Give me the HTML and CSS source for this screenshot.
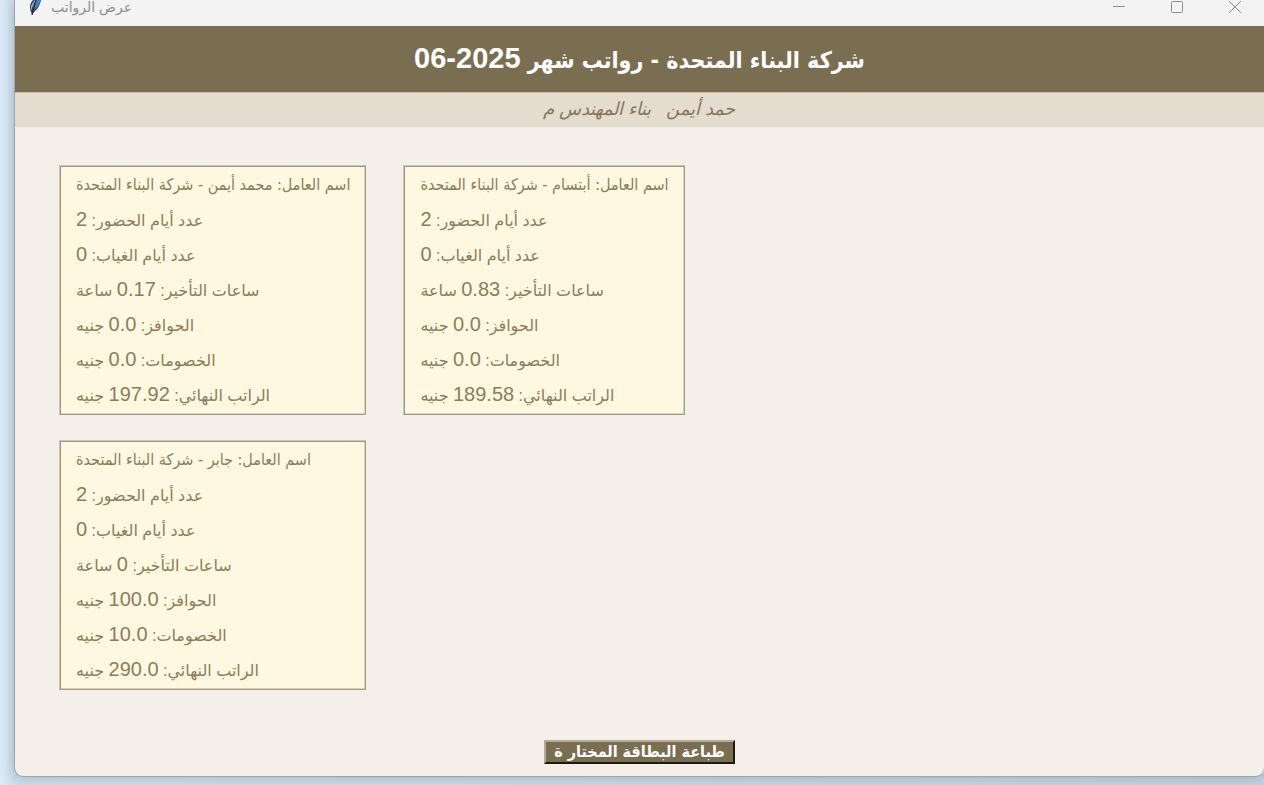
FILE: index.html
```html
<!DOCTYPE html>
<html lang="ar">
<head>
<meta charset="utf-8">
<title>عرض الرواتب</title>
<link rel="stylesheet" href="styles.css">
</head>
<body>
<div class="window">
  <div class="titlebar">
    <svg class="app-icon" width="12" height="16" viewBox="0 0 12 16" aria-hidden="true">
      <path d="M12 0 L4 0 C1 3 0 8 2 12 L3 15 L5 12 C9 9 11 5 12 0Z" fill="#3a444f"/>
      <path d="M12 0 L7 0 C5 4 4 7 4 11 C8 8 11 4 12 0Z" fill="#3f7fd0"/>
      <path d="M6 0 C3 4 1 7 2 11 C3 7 5 3 7 0Z" fill="#a9b6bd"/>
      <path d="M7 0 L3 15" stroke="#14181d" fill="none"/>
    </svg>
    <span class="caption" dir="rtl">عرض الرواتب</span>
    <div class="controls">
      <button type="button" aria-label="Minimize"><svg width="12" height="14" viewBox="0 0 12 14"><path d="M0 6.5H12" stroke="#8c8c8c" fill="none"/></svg></button>
      <button type="button" aria-label="Maximize"><svg width="12" height="14" viewBox="0 0 12 14"><rect x=".5" y="1.5" width="11" height="11" rx="1" stroke="#8c8c8c" fill="none"/></svg></button>
      <button type="button" aria-label="Close"><svg width="12" height="14" viewBox="0 0 12 14"><path d="M0 1L12 13M12 1L0 13" stroke="#8c8c8c" fill="none"/></svg></button>
    </div>
  </div>
  <h1 class="header" dir="rtl">شركة البناء المتحدة - رواتب شهر <bdi class="num">06-2025</bdi></h1>
  <p class="subtitle" dir="rtl">حمد أيمن &nbsp; بناء المهندس م</p>
  <main class="cards">
    <ul class="card" dir="rtl">
      <li class="name">اسم العامل: محمد أيمن - شركة البناء المتحدة</li>
      <li>عدد أيام الحضور: <span class="num">2</span></li>
      <li>عدد أيام الغياب: <span class="num">0</span></li>
      <li>ساعات التأخير: <span class="num">0.17</span> ساعة</li>
      <li>الحوافز: <span class="num">0.0</span> جنيه</li>
      <li>الخصومات: <span class="num">0.0</span> جنيه</li>
      <li>الراتب النهائي: <span class="num">197.92</span> جنيه</li>
    </ul>
    <ul class="card" dir="rtl">
      <li class="name">اسم العامل: أبتسام - شركة البناء المتحدة</li>
      <li>عدد أيام الحضور: <span class="num">2</span></li>
      <li>عدد أيام الغياب: <span class="num">0</span></li>
      <li>ساعات التأخير: <span class="num">0.83</span> ساعة</li>
      <li>الحوافز: <span class="num">0.0</span> جنيه</li>
      <li>الخصومات: <span class="num">0.0</span> جنيه</li>
      <li>الراتب النهائي: <span class="num">189.58</span> جنيه</li>
    </ul>
    <ul class="card" dir="rtl">
      <li class="name">اسم العامل: جابر - شركة البناء المتحدة</li>
      <li>عدد أيام الحضور: <span class="num">2</span></li>
      <li>عدد أيام الغياب: <span class="num">0</span></li>
      <li>ساعات التأخير: <span class="num">0</span> ساعة</li>
      <li>الحوافز: <span class="num">100.0</span> جنيه</li>
      <li>الخصومات: <span class="num">10.0</span> جنيه</li>
      <li>الراتب النهائي: <span class="num">290.0</span> جنيه</li>
    </ul>
  </main>
  <div class="actions"><button type="button" class="print" dir="rtl">طباعة البطاقة المختار ة</button></div>
</div>
</body>
</html>
```
FILE: styles.css
```css
* { box-sizing: border-box; }
body {
  margin: 0;
  min-height: 100vh;
  padding: 0 0 8px 14px;
  display: flex;
  background: linear-gradient(to right, #dcebf7, #cfdfea 14px, #c4d2de);
  font-family: "Liberation Sans", "DejaVu Sans", sans-serif;
  overflow: hidden;
}
.window {
  flex: 1;
  display: flex;
  flex-direction: column;
  background: #f4efe9;
  border: 1px solid #9aa5ad;
  border-width: 0 0 1px 1px;
  border-radius: 0 0 9px 9px;
  box-shadow: 0 0 14px rgba(70, 95, 120, .35);
  overflow: hidden;
}
.titlebar {
  height: 26px;
  display: flex;
  align-items: flex-start;
  background: #f3f3f3;
  padding-left: 14px;
}
.caption {
  margin-left: 10px;
  font-size: 14px;
  line-height: 14px;
  color: #8e8e8e;
}
.controls { margin-left: auto; display: flex; }
.controls button {
  width: 58px;
  height: 14px;
  padding: 0;
  border: 0;
  background: none;
  line-height: 0;
}
.header {
  margin: 0;
  height: 66px;
  line-height: 64px;
  text-align: center;
  font-family: "DejaVu Sans Condensed", "DejaVu Sans", sans-serif;
  font-size: 23px;
  color: #fff;
  background: #7a6e50;
}
.num { font-family: "Liberation Sans", sans-serif; }
.header .num { font-size: 29px; }
.subtitle {
  margin: 0;
  height: 35px;
  line-height: 32px;
  text-align: center;
  font-size: 18px;
  font-style: italic;
  color: #84775a;
  background: #e4dccf;
  border-top: 1px solid #c9bfa9;
}
.cards {
  flex: 1;
  padding: 38px 44px;
  display: grid;
  grid-template-columns: max-content max-content;
  grid-auto-rows: max-content;
  gap: 25px 37px;
}
.card {
  margin: 0;
  padding: 1px 15px 2px 16px;
  list-style: none;
  text-align: left;
  background: #fff8e1;
  border: 1px solid;
  border-color: #cdc6b4 #a39b86 #a39b86 #cdc6b4;
  box-shadow: inset 1px 1px #a09781, inset -1px -1px #d8d1bb;
  color: #8b7d5c;
  font-size: 16px;
}
.card li { height: 35px; line-height: 35px; white-space: nowrap; }
.card .name { font-family: "DejaVu Sans Condensed", "DejaVu Sans", sans-serif; }
.card .num { font-size: 20px; }
.actions { display: flex; justify-content: center; padding-bottom: 12px; }
.print {
  height: 24px;
  padding: 0 8px;
  font: bold 16px/18px "DejaVu Sans Condensed", "DejaVu Sans", sans-serif;
  color: #fff;
  background: #7a6e50;
  border: 2px solid;
  border-color: #b5ad98 #1d1a12 #1d1a12 #b5ad98;
}
```
